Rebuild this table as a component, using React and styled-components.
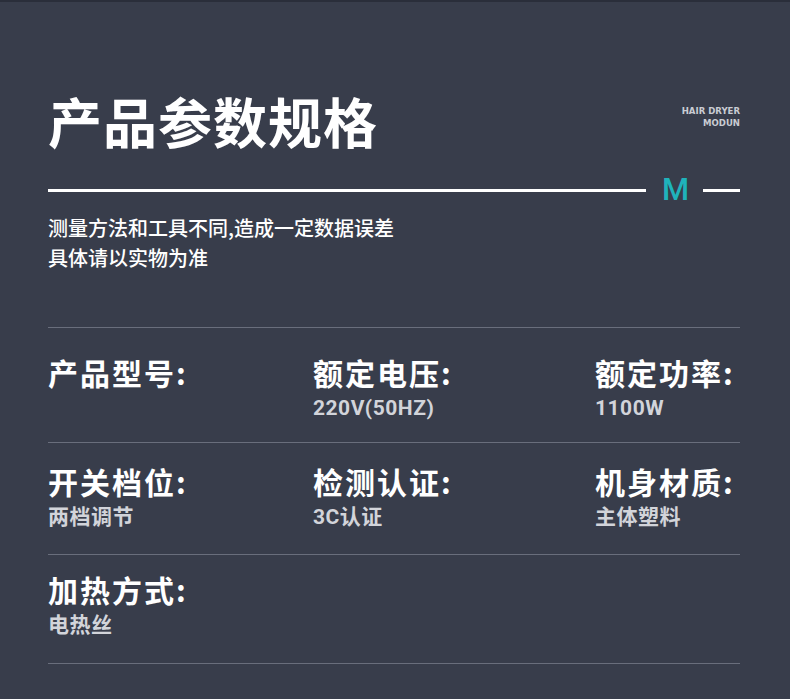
import React from 'react'
import styled, { createGlobalStyle } from 'styled-components'

const GlobalStyle = createGlobalStyle`
  html, body {
    margin: 0;
    padding: 0;
    background: #383d4b;
  }
  body {
    font-family: "Noto Sans CJK SC", "Noto Sans", sans-serif;
  }
`;

const specs = [
  { label: '产品型号:', value: '' },
  { label: '额定电压:', value: '220V(50HZ)' },
  { label: '额定功率:', value: '1100W' },
  { label: '开关档位:', value: '两档调节' },
  { label: '检测认证:', value: '3C认证' },
  { label: '机身材质:', value: '主体塑料' },
  { label: '加热方式:', value: '电热丝' },
];

const Page = styled.div`
  width: 790px;
  height: 699px;
  box-sizing: border-box;
  background: #383d4b;
  border-top: 2px solid #2a2e3a;
  padding: 0 50px 0 48px;
  overflow: hidden;
`;

const Header = styled.div`
  display: flex;
  justify-content: space-between;
  align-items: flex-start;
  padding-top: 89px;
`;

const Title = styled.h1`
  margin: 0;
  font-size: 54px;
  line-height: 60px;
  font-weight: 700;
  color: #ffffff;
  letter-spacing: 1px;
`;

const Tag = styled.div`
  margin-top: 14px;
  text-align: right;
  font-family: "DejaVu Sans Condensed", "DejaVu Sans", sans-serif;
  font-weight: 700;
  font-size: 9.5px;
  line-height: 12px;
  color: #c9ccd3;
`;

const RuleRow = styled.div`
  display: flex;
  align-items: center;
  margin-top: 24px;
  height: 30px;
`;

const Rule = styled.div`
  height: 3px;
  background: #ffffff;
  flex: ${(p) => (p.short ? '0 0 37px' : '1')};
`;

const Mark = styled.span`
  margin: 0 14px 0 16px;
  font-family: "Roboto", sans-serif;
  font-weight: 500;
  font-size: 31px;
  line-height: 30px;
  color: #1fb3bb;
`;

const Note = styled.p`
  margin: 8px 0 0;
  font-size: 20px;
  line-height: 30px;
  font-weight: 500;
  color: #ffffff;
`;

const Table = styled.div`
  margin-top: 54px;
  display: grid;
  grid-template-columns: 265px 282px 1fr;
  border-top: 1px solid #696e7c;
`;

const Row = styled.div`
  grid-column: 1 / -1;
  display: grid;
  grid-template-columns: subgrid;
  height: ${(p) => p.h}px;
  box-sizing: border-box;
  padding-top: ${(p) => p.pt}px;
  border-bottom: 1px solid #696e7c;
`;

const Cell = styled.div`
  display: flex;
  flex-direction: column;
`;

const Label = styled.div`
  font-size: 30px;
  line-height: 36px;
  font-weight: 700;
  color: #ffffff;
  letter-spacing: 2px;
  white-space: nowrap;
`;

const Value = styled.div`
  margin-top: 4px;
  font-family: "Roboto", "Noto Sans CJK SC", sans-serif;
  font-size: 21px;
  line-height: 28px;
  font-weight: 700;
  letter-spacing: 0.5px;
  color: #d2d4da;
  white-space: nowrap;
`;

const rows = [
  { h: 115, pt: 26, items: specs.slice(0, 3) },
  { h: 112, pt: 20, items: specs.slice(3, 6) },
  { h: 109, pt: 16, items: specs.slice(6) },
];

export default function App() {
  return (
    <Page>
      <GlobalStyle />
      <Header>
        <Title>产品参数规格</Title>
        <Tag>
          HAIR DRYER
          <br />
          MODUN
        </Tag>
      </Header>
      <RuleRow>
        <Rule />
        <Mark>M</Mark>
        <Rule short />
      </RuleRow>
      <Note>
        测量方法和工具不同,造成一定数据误差
        <br />
        具体请以实物为准
      </Note>
      <Table>
        {rows.map((r, i) => (
          <Row key={i} h={r.h} pt={r.pt}>
            {r.items.map((s) => (
              <Cell key={s.label}>
                <Label>{s.label}</Label>
                <Value>{s.value}</Value>
              </Cell>
            ))}
          </Row>
        ))}
      </Table>
    </Page>
  )
}
